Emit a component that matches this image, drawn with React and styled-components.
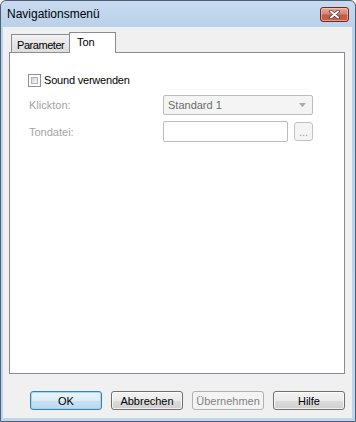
import React from "react";
import styled, { createGlobalStyle, css } from "styled-components";

const Global = createGlobalStyle`
  html, body { margin: 0; padding: 0; background: #ffffff; }
  body { font-family: "Liberation Sans", Arial, sans-serif; }
  * { box-sizing: border-box; }
`;

const Window = styled.div`
  width: 356px;
  height: 422px;
  border: 1px solid #4d5e77;
  border-radius: 6px 6px 0 0;
  background: linear-gradient(#c7daef 0px, #b9d1ea 26px, #bed5ec 100%);
  display: flex;
  flex-direction: column;
  padding: 0 3px 3px 2px;
  overflow: hidden;
`;

const TitleBar = styled.div`
  height: 26px;
  display: flex;
  align-items: center;
  justify-content: space-between;
  padding: 0 3px 1px 4px;
`;

const Title = styled.span`
  font-family: "Liberation Sans", Arial, sans-serif;
  font-size: 12px;
  color: #000;
`;

const CloseButton = styled.div`
  width: 29px;
  height: 15px;
  margin-top: 1px;
  border: 1px solid #6e2a22;
  border-radius: 3px;
  background: linear-gradient(#e9a99c 0%, #d98474 45%, #c35a45 55%, #c9604a 100%);
  box-shadow: inset 0 0 0 1px rgba(255, 210, 200, 0.55);
  display: flex;
  align-items: center;
  justify-content: center;
`;

const Client = styled.div`
  flex: 1;
  background: #f0f0f0;
  display: flex;
  flex-direction: column;
  padding: 5px 7px 8px 6px;
`;

const TabRow = styled.div`
  display: flex;
  align-items: flex-end;
  height: 21px;
  padding-left: 2px;
  margin-bottom: -1px;
  position: relative;
  z-index: 1;
`;

const Tab = styled.div`
  font-size: 11px;
  color: #000;
  border: 1px solid #898c95;
  border-bottom: none;
  white-space: nowrap;
  ${(p) =>
    p.$active
      ? css`
          width: 47px;
          height: 21px;
          background: #ffffff;
          padding: 3px 0 0 7px;
        `
      : css`
          width: 58px;
          height: 18px;
          margin-bottom: 1px;
          border-right: none;
          background: linear-gradient(#f3f3f3, #e6e6e6 50%, #dedede);
          padding: 4px 0 0 5px;
          letter-spacing: -0.45px;
        `}
`;

const Panel = styled.div`
  flex: 1;
  background: #ffffff;
  border: 1px solid #898c95;
  padding: 20px 0 0 18px;
  display: flex;
  flex-direction: column;
`;

const CheckRow = styled.div`
  display: flex;
  align-items: center;
  gap: 3px;
  height: 14px;
`;

const CheckBox = styled.span`
  width: 13px;
  height: 13px;
  border: 1px solid #8e8f8f;
  background: #ffffff;
  padding: 2px;
  display: flex;
`;

const CheckInner = styled.span`
  flex: 1;
  border: 1px solid #b0b4ba;
  background: linear-gradient(135deg, #cdd1d6, #eeeeee 70%, #f6f6f6);
`;

const CheckLabel = styled.span`
  font-size: 11px;
  color: #000;
  letter-spacing: -0.2px;
`;

const FieldGrid = styled.div`
  display: grid;
  grid-template-columns: 135px 150px;
  grid-template-rows: 20px 21px;
  row-gap: 6px;
  margin-top: 8px;
  align-items: center;
`;

const FieldLabel = styled.span`
  font-size: 11px;
  color: #a3a3a3;
  padding-left: 1px;
`;

const Select = styled.div`
  height: 20px;
  border: 1px solid #bcbcbc;
  border-radius: 2px;
  background: #f4f4f4;
  display: flex;
  align-items: center;
  justify-content: space-between;
  padding: 0 6px 0 4px;
  font-size: 11px;
  color: #6d6d6d;
`;

const FileRow = styled.div`
  display: flex;
  align-items: center;
  gap: 6px;
  height: 21px;
`;

const TextBox = styled.div`
  width: 125px;
  height: 21px;
  border: 1px solid #bcbcbc;
  border-radius: 2px;
  background: #ffffff;
`;

const BrowseButton = styled.div`
  width: 19px;
  height: 19px;
  border: 1px solid #c2c2c2;
  border-radius: 3px;
  background: #f4f4f4;
  color: #a0a0a0;
  font-size: 11px;
  display: flex;
  align-items: flex-end;
  justify-content: center;
  padding-bottom: 2px;
  line-height: 1;
`;

const ButtonRow = styled.div`
  display: flex;
  justify-content: flex-end;
  gap: 9px;
  margin-top: 17px;
  height: 19px;
`;

const Button = styled.div`
  width: 72px;
  height: 19px;
  border-radius: 3px;
  font-size: 11px;
  display: flex;
  align-items: center;
  justify-content: center;
  border: 1px solid #707070;
  color: #000;
  background: linear-gradient(#f2f2f2 0%, #ebebeb 50%, #dddddd 50%, #cfcfcf 100%);
  box-shadow: inset 0 0 0 1px rgba(255, 255, 255, 0.7);
  ${(p) =>
    p.$default &&
    css`
      border-color: #3c7fb1;
      background: linear-gradient(#eaf4fb 0%, #dcedf8 50%, #c9e1f1 50%, #bdd9ed 100%);
      box-shadow: inset 0 0 0 1px #9fd6f4;
    `}
  ${(p) =>
    p.$disabled &&
    css`
      border-color: #adb2b5;
      background: #f4f4f4;
      color: #838383;
      box-shadow: none;
    `}
`;

export default function App() {
  return (
    <>
      <Global />
      <Window>
        <TitleBar>
          <Title>Navigationsmenü</Title>
          <CloseButton>
            <svg width="11" height="9" viewBox="0 0 11 9">
              <path d="M2 1.5 L9 7.5 M9 1.5 L2 7.5" stroke="#5a3a36" strokeWidth="3.6" strokeLinecap="round" />
              <path d="M2 1.5 L9 7.5 M9 1.5 L2 7.5" stroke="#ffffff" strokeWidth="2" strokeLinecap="round" />
            </svg>
          </CloseButton>
        </TitleBar>
        <Client>
          <TabRow>
            <Tab>Parameter</Tab>
            <Tab $active>Ton</Tab>
          </TabRow>
          <Panel>
            <CheckRow>
              <CheckBox>
                <CheckInner />
              </CheckBox>
              <CheckLabel>Sound verwenden</CheckLabel>
            </CheckRow>
            <FieldGrid>
              <FieldLabel>Klickton:</FieldLabel>
              <Select>
                <span>Standard 1</span>
                <svg width="7" height="4" viewBox="0 0 7 4">
                  <polygon points="0,0 7,0 3.5,4" fill="#a8a8a8" />
                </svg>
              </Select>
              <FieldLabel>Tondatei:</FieldLabel>
              <FileRow>
                <TextBox />
                <BrowseButton>...</BrowseButton>
              </FileRow>
            </FieldGrid>
          </Panel>
          <ButtonRow>
            <Button $default>OK</Button>
            <Button>Abbrechen</Button>
            <Button $disabled>Übernehmen</Button>
            <Button>Hilfe</Button>
          </ButtonRow>
        </Client>
      </Window>
    </>
  );
}
